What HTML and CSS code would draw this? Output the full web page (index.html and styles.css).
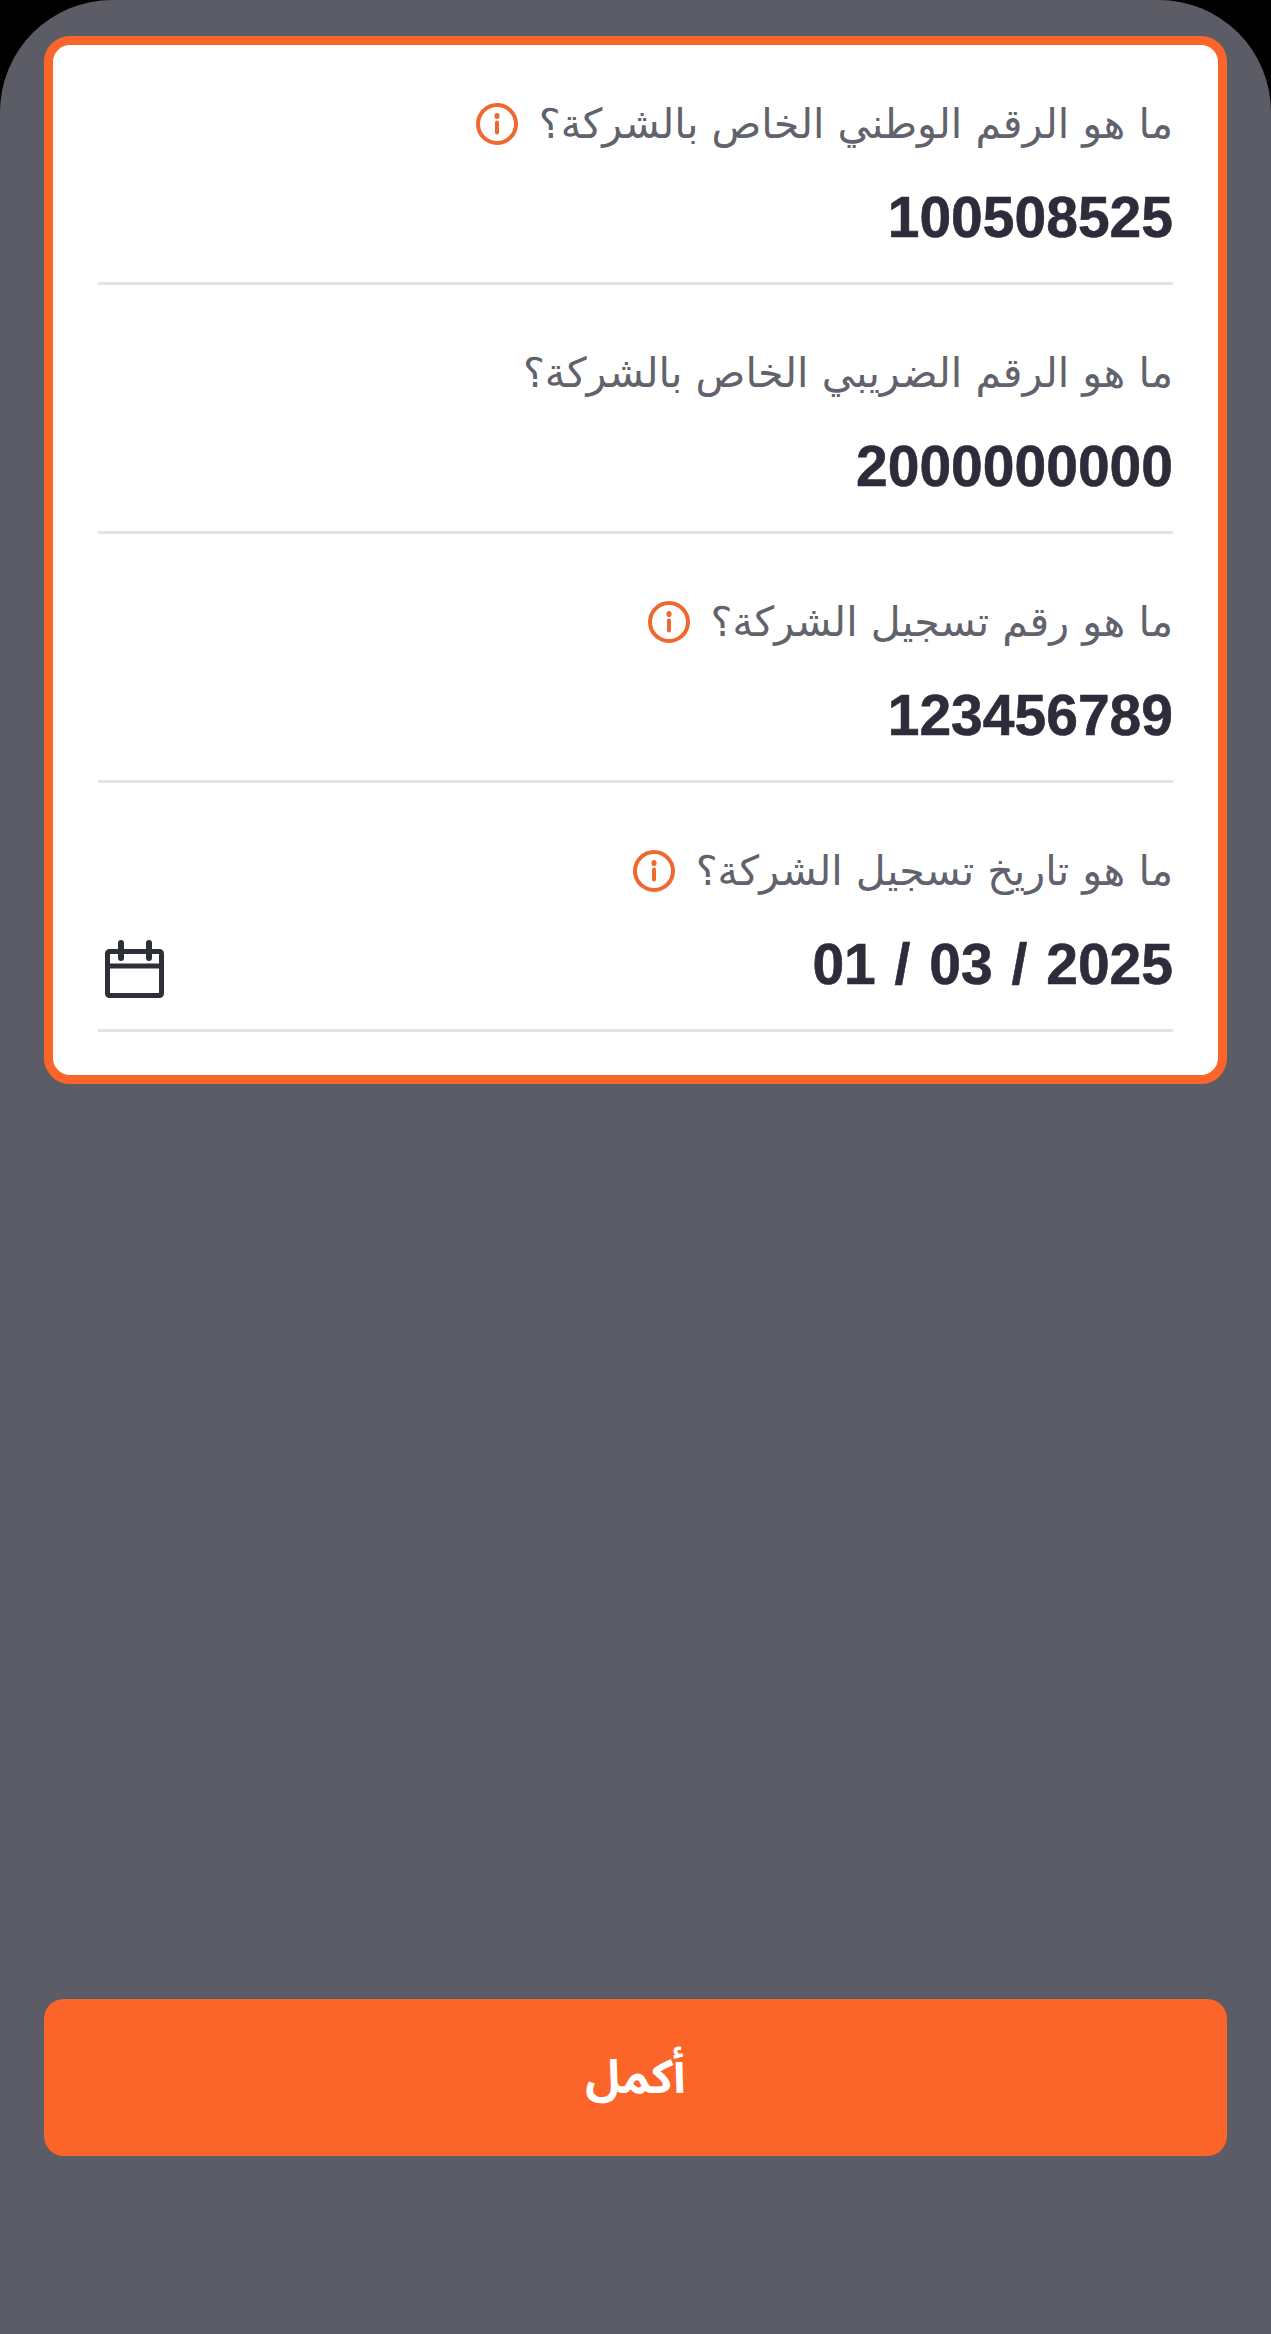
FILE: index.html
```html
<!DOCTYPE html>
<html lang="ar" dir="rtl">
<head>
<meta charset="utf-8">
<title>معلومات الشركة</title>
<link rel="stylesheet" href="styles.css">
</head>
<body>
<main class="screen">
  <section class="card">
    <div class="field">
      <div class="label"><span>ما هو الرقم الوطني الخاص بالشركة؟</span>
        <svg class="info" viewBox="0 0 42 42"><circle cx="21" cy="21" r="19" /><path d="M21 19.5v10" /><path class="dot" d="M21 12.5v1" /></svg>
      </div>
      <div class="value-row"><span class="value">100508525</span></div>
    </div>
    <div class="field">
      <div class="label"><span>ما هو الرقم الضريبي الخاص بالشركة؟</span></div>
      <div class="value-row"><span class="value">2000000000</span></div>
    </div>
    <div class="field">
      <div class="label"><span>ما هو رقم تسجيل الشركة؟</span>
        <svg class="info" viewBox="0 0 42 42"><circle cx="21" cy="21" r="19" /><path d="M21 19.5v10" /><path class="dot" d="M21 12.5v1" /></svg>
      </div>
      <div class="value-row"><span class="value">123456789</span></div>
    </div>
    <div class="field">
      <div class="label"><span>ما هو تاريخ تسجيل الشركة؟</span>
        <svg class="info" viewBox="0 0 42 42"><circle cx="21" cy="21" r="19" /><path d="M21 19.5v10" /><path class="dot" d="M21 12.5v1" /></svg>
      </div>
      <div class="value-row"><span class="value date" dir="ltr">01 / 03 / 2025</span>
        <svg class="calendar" viewBox="0 0 60 60"><rect x="2.5" y="13.5" width="54" height="44" rx="2" /><path d="M2.5 28h54" /><path class="pegs" d="M16 5v15M44 5v15" /></svg>
      </div>
    </div>
  </section>
  <button class="primary" type="button">أكمل</button>
</main>
</body>
</html>
```
FILE: styles.css
```css
* { box-sizing: border-box; }
html, body { margin: 0; background: #000; }
.screen {
  height: 2334px;
  padding: 36px 44px 178px;
  background: #5c5c66;
  border-radius: 112px 112px 0 0;
  display: flex;
  flex-direction: column;
  justify-content: space-between;
}
.card {
  display: flex;
  flex-direction: column;
  gap: 60px;
  height: 1048px;
  padding: 51px 45px 0;
  background: #fff;
  border: 9px solid #fc6529;
  border-radius: 26px;
}
.field { border-bottom: 3px solid #e3e3e5; }
.label {
  display: flex;
  align-items: center;
  gap: 21px;
  height: 56px;
  font-family: "DejaVu Sans", sans-serif;
  font-size: 41.2px;
  color: #62626c;
}
.info { width: 42px; height: 42px; fill: none; stroke: #f0682f; stroke-width: 4; stroke-linecap: round; }
.info .dot { stroke-width: 5; }
.value-row {
  display: flex;
  align-items: center;
  justify-content: space-between;
  height: 70px;
  margin-top: 30px;
  margin-bottom: 30px;
}
.value {
  font-family: "Liberation Sans", sans-serif;
  font-size: 57px;
  font-weight: 700;
  line-height: 70px;
  color: #2c2c3a;
  -webkit-text-stroke: 0.6px #2c2c3a;
}
.date { word-spacing: 3px; }
.calendar {
  width: 60px;
  height: 60px;
  margin-top: 8px;
  margin-inline-end: 7px;
  fill: none;
  stroke: #2d3036;
  stroke-width: 5;
  stroke-linecap: round;
  stroke-linejoin: round;
}
.calendar .pegs { stroke-width: 6; }
.primary {
  height: 157px;
  border: 0;
  border-radius: 20px;
  background: #fc6529;
  color: #fff;
  font-family: "Noto Sans Arabic", sans-serif;
  font-size: 47px;
  font-weight: 700;
}
```
